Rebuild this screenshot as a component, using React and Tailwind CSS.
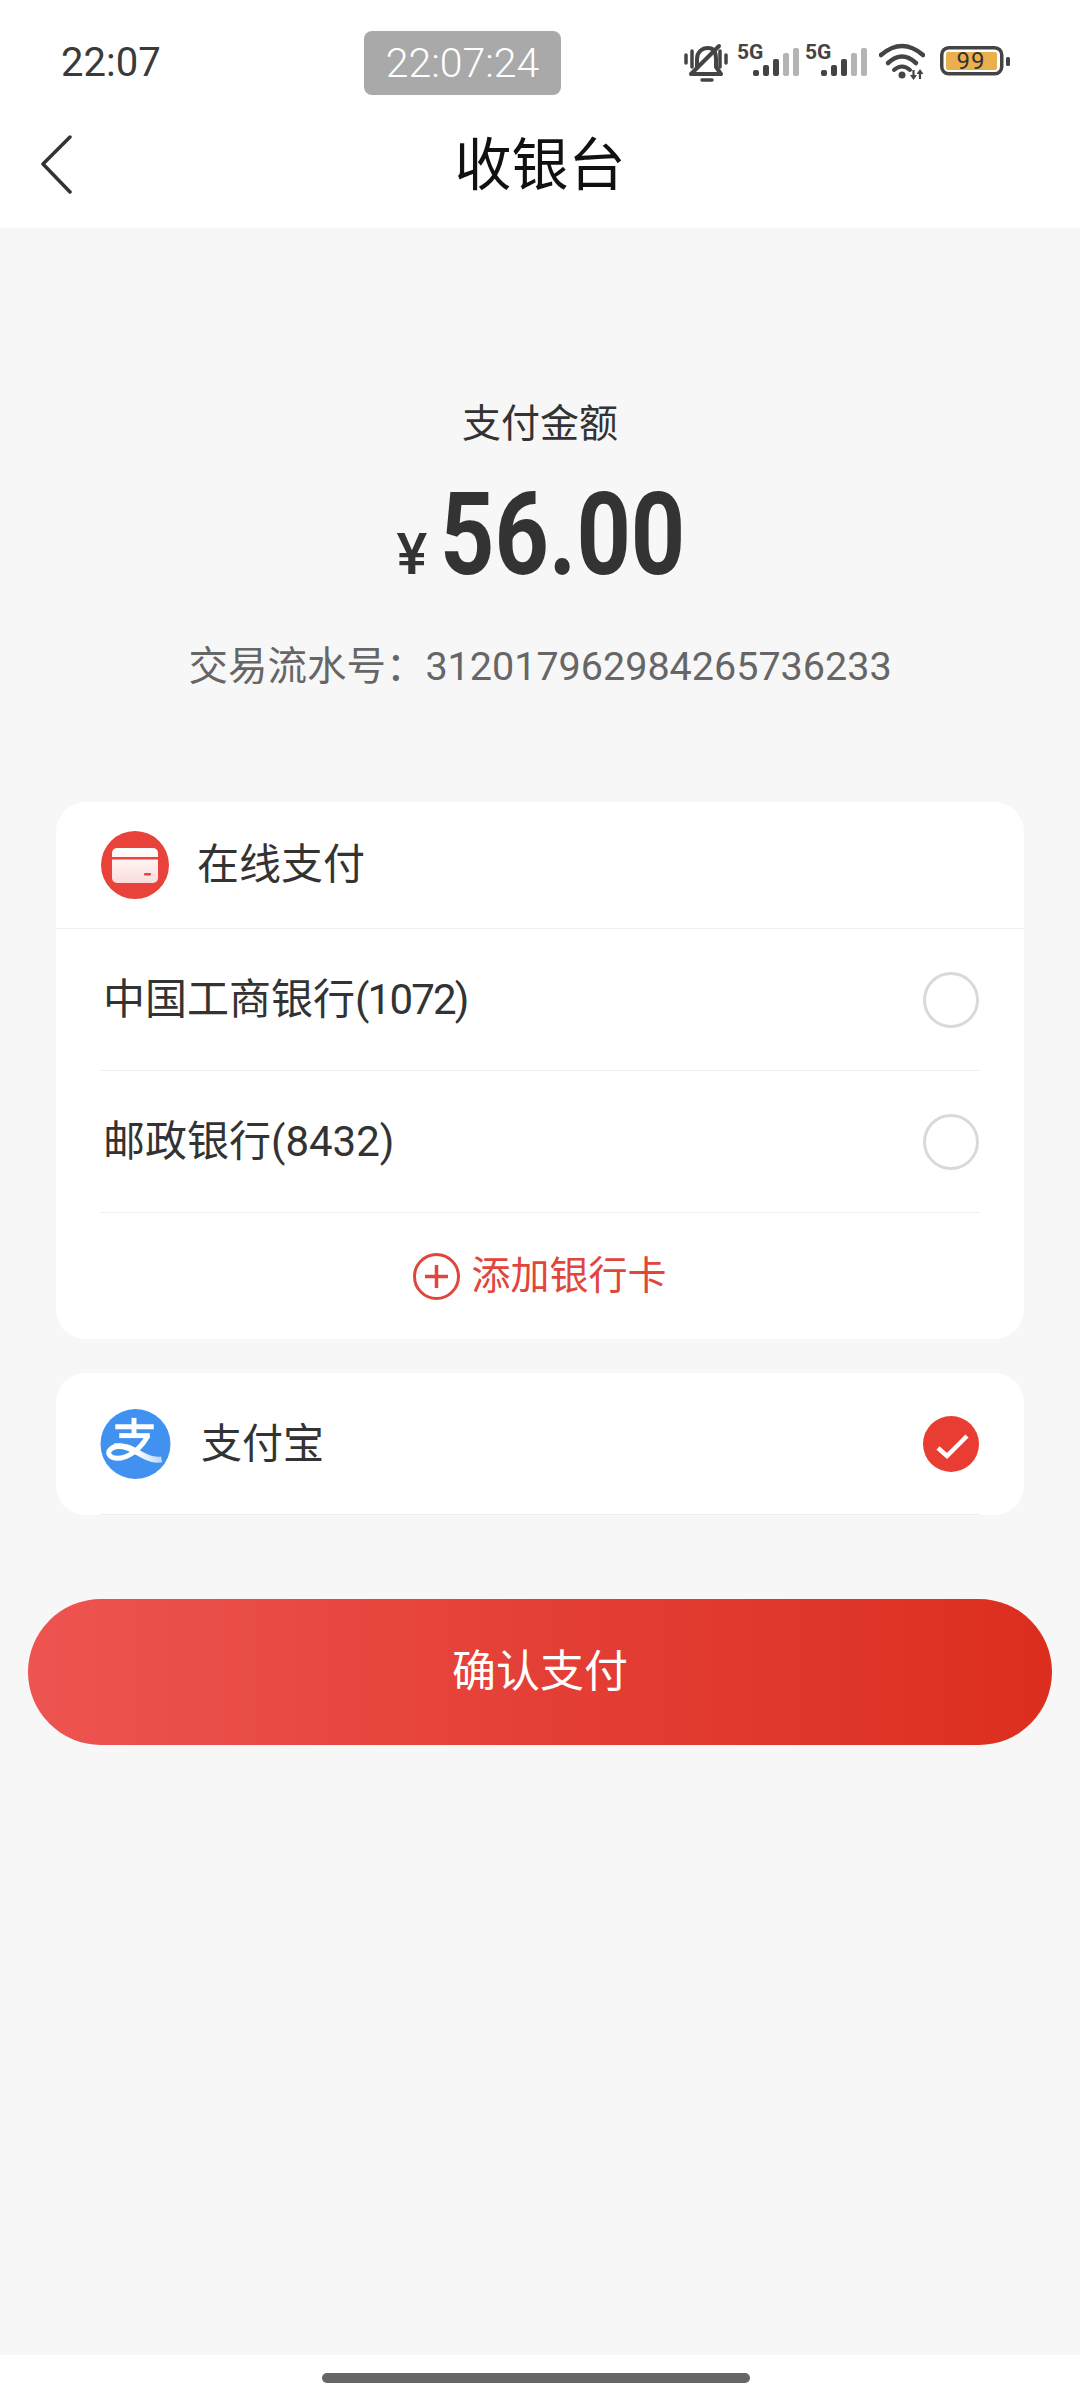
const font = { fontFamily: 'Roboto, "Noto Sans CJK SC", sans-serif' };

function Bell() {
  return (
    <svg width="44" height="40" viewBox="0 0 44 40" fill="none" stroke="#444" strokeLinecap="round" strokeLinejoin="round">
      <path d="M2 12V20M8 8V24M36 8V24M42 12V20" strokeWidth="3.5" />
      <path d="M13 25V16C13 9 18 5 24 5C30 5 32 10 32 16V24L37 31H9" strokeWidth="4" />
      <path d="M35 3L7 31" strokeWidth="4" />
      <path d="M18 37H28" strokeWidth="3.5" />
    </svg>
  );
}

function Signal() {
  const bars = [
    [16, 27, '#444'],
    [26, 22, '#444'],
    [36, 16, '#444'],
    [46, 10, '#b4b4b4'],
    [56, 5, '#b4b4b4'],
  ];
  return (
    <svg width="62" height="42" viewBox="0 -6 62 42" className="-mt-[6px]">
      <text x="0" y="16" fontSize="21" fontWeight="700" fill="#444" fontFamily="Roboto, sans-serif">5G</text>
      {bars.map(([x, y, c]) => (
        <rect key={x} x={x} y={y} width="6" height={33 - y} rx="2" fill={c} />
      ))}
    </svg>
  );
}

function Wifi() {
  return (
    <svg width="46" height="38" viewBox="0 0 46 38" fill="none" stroke="#444" strokeLinecap="round">
      <path d="M2 12Q23 -6 44 12" strokeWidth="4.5" />
      <path d="M9 20Q23 7 37 20" strokeWidth="4.5" />
      <path d="M15 27Q23 20 31 27" strokeWidth="4" />
      <circle cx="23" cy="32" r="3.5" fill="#444" stroke="none" />
      <path d="M34.5 27V33M41 36V30" strokeWidth="2.2" strokeLinecap="butt" />
      <path d="M31 32H38L34.5 37ZM37.5 31H44.5L41 26Z" fill="#444" stroke="none" />
    </svg>
  );
}

function Battery() {
  return (
    <svg width="71" height="30" viewBox="0 0 71 30">
      <rect x="1.75" y="1.75" width="60" height="26" rx="7" fill="none" stroke="#444" strokeWidth="3.5" />
      <rect x="6" y="6" width="51" height="18" rx="2" fill="#ebb04e" />
      <text x="31" y="23" textAnchor="middle" fontSize="24" letterSpacing="1" fill="#333" fontFamily="Roboto, sans-serif">99</text>
      <rect x="66" y="11" width="4" height="9" rx="1.5" fill="#444" />
    </svg>
  );
}

function Back() {
  return (
    <svg width="34" height="60" viewBox="0 0 34 60" fill="none" stroke="#333" strokeWidth="3.5" strokeLinecap="round" strokeLinejoin="round">
      <path d="M30 2L3 29L30 57" />
    </svg>
  );
}

function CardIcon() {
  return (
    <svg width="68" height="68" viewBox="0 0 68 68">
      <defs>
        <linearGradient id="cardFill" x1="0" y1="0" x2="0" y2="1">
          <stop offset="0" stopColor="#ffffff" />
          <stop offset="1" stopColor="#fbdcdc" />
        </linearGradient>
      </defs>
      <circle cx="34" cy="34" r="34" fill="#e8423a" />
      <rect x="11" y="17" width="46" height="35" rx="5" fill="url(#cardFill)" />
      <rect x="11" y="26" width="46" height="2.5" fill="#e8423a" />
      <rect x="43" y="42" width="7" height="2.5" rx="1" fill="#e8423a" />
    </svg>
  );
}

function AlipayIcon() {
  return (
    <svg width="71" height="70" viewBox="0 0 71 71" fill="none" strokeLinecap="butt">
      <defs>
        <linearGradient id="swoosh" x1="0" y1="0" x2="1" y2="0">
          <stop offset="0.45" stopColor="#ffffff" />
          <stop offset="1" stopColor="#bcd8f5" />
        </linearGradient>
      </defs>
      <circle cx="35.5" cy="35.5" r="35.5" fill="#4191f1" />
      <g stroke="#ffffff" strokeWidth="5">
        <path d="M15 18H54" />
        <path d="M34 9V27" />
        <path d="M19 27H50" />
        <path d="M48 27C41 41 27 50 17 50C9 50 6 44 10 41C15 36 24 37 33 41" />
      </g>
      <path d="M14 38C28 36 36 44 45 48C51 51 57 52 62 51" stroke="url(#swoosh)" strokeWidth="6" />
    </svg>
  );
}

function Radio() {
  return <div className="w-[56px] h-[56px] mr-[1px] rounded-full border-[3px] border-[#d9d9d9] bg-white shrink-0" />;
}

function Check() {
  return (
    <svg width="56" height="56" viewBox="0 0 56 56" fill="none" className="shrink-0 mr-[1px]">
      <circle cx="28" cy="28" r="28" fill="#e93d33" />
      <path d="M15 32L24 40L44 20" stroke="#fff" strokeWidth="4.5" />
    </svg>
  );
}

function Plus() {
  return (
    <svg width="47" height="47" viewBox="0 0 47 47" fill="none" stroke="#e0463c">
      <circle cx="23.5" cy="23.5" r="22" strokeWidth="3" />
      <path d="M12 23.5H35M23.5 12V35" strokeWidth="3.5" />
    </svg>
  );
}

export default function App() {
  return (
    <div className="w-[1080px] min-h-[2400px] flex flex-col bg-[#f7f7f7]" style={font}>
      <header className="bg-white h-[228px] flex flex-col">
        <div className="flex items-center pt-[31px] h-[95px]">
          <div className="w-[364px] pl-[61px] text-[40px] leading-[50px] text-[#3a3a3a]">22:07</div>
          <div className="w-[197px] h-[64px] rounded-[8px] bg-[#a9a9a9] text-white text-[41px] leading-[50px] flex items-center justify-center font-light">22:07:24</div>
          <div className="ml-[123px] flex items-start">
            <Bell />
            <div className="ml-[9px]"><Signal /></div>
            <div className="ml-[6px]"><Signal /></div>
            <div className="ml-[12px]"><Wifi /></div>
            <div className="ml-[15px] mt-[3px]"><Battery /></div>
          </div>
        </div>
        <div className="flex-1 grid grid-cols-[1fr_auto_1fr] items-center">
          <div className="pl-[40px] flex items-center pt-[7px]"><Back /></div>
          <h1 className="text-[57px] leading-[70px] text-[#111111] font-normal pt-[9px]">收银台</h1>
          <div />
        </div>
      </header>

      <main className="flex-1 flex flex-col">
        <div className="mt-[171px] text-center text-[39px] leading-[50px] text-[#333333]">支付金额</div>
        <div className="h-[172px] mb-[21px] pr-[4px] flex justify-center items-baseline text-[#333333] leading-[172px]">
          <span className="text-[58px] font-medium w-[31px]">¥</span>
          <span className="ml-[12px] w-[240px] text-[115px] font-bold whitespace-nowrap inline-block origin-left scale-x-[0.825]">56.00</span>
        </div>
        <div className="text-center text-[39.5px] leading-[50px] text-[#666666]">交易流水号：312017962984265736233</div>

        <section className="mt-[110px] mx-[56px] bg-white rounded-[30px] overflow-hidden">
          <div className="h-[127px] flex items-center pl-[45px] border-b-[1.5px] border-[#eeeeee]">
            <CardIcon />
            <span className="ml-[28px] text-[42px] leading-[50px] text-[#333333]">在线支付</span>
          </div>
          <div className="mx-[44px] h-[142px] flex items-center justify-between border-b-[1.5px] border-[#eeeeee]">
            <span className="text-[42px] leading-[50px] text-[#333333] pl-[3px]">中国工商银行<span className="tracking-[-1.8px]">(1072)</span></span>
            <Radio />
          </div>
          <div className="mx-[44px] h-[142px] flex items-center justify-between border-b-[1.5px] border-[#eeeeee]">
            <span className="text-[42px] leading-[50px] text-[#333333] pl-[3px]">邮政银行(8432)</span>
            <Radio />
          </div>
          <div className="h-[126px] flex items-center justify-center">
            <Plus />
            <span className="ml-[11px] text-[39px] leading-[50px] text-[#e0463c]">添加银行卡</span>
          </div>
        </section>

        <section className="mt-[34px] mx-[56px] bg-white rounded-[30px]">
          <div className="mx-[44px] h-[142px] flex items-center justify-between border-b-[1.5px] border-[#eeeeee]">
            <div className="flex items-center">
              <AlipayIcon />
              <span className="ml-[30px] text-[41px] leading-[50px] text-[#333333]">支付宝</span>
            </div>
            <Check />
          </div>
        </section>

        <button className="mt-[84px] mx-[28px] h-[146px] rounded-full bg-gradient-to-r from-[#ee5450] via-[#e43f36] to-[#dc2e1e] text-white text-[44px]">
          确认支付
        </button>
      </main>

      <footer className="bg-white h-[45px] flex justify-center pt-[18px] pr-[8px]">
        <div className="w-[428px] h-[10px] rounded-full bg-[#666666]" />
      </footer>
    </div>
  );
}
